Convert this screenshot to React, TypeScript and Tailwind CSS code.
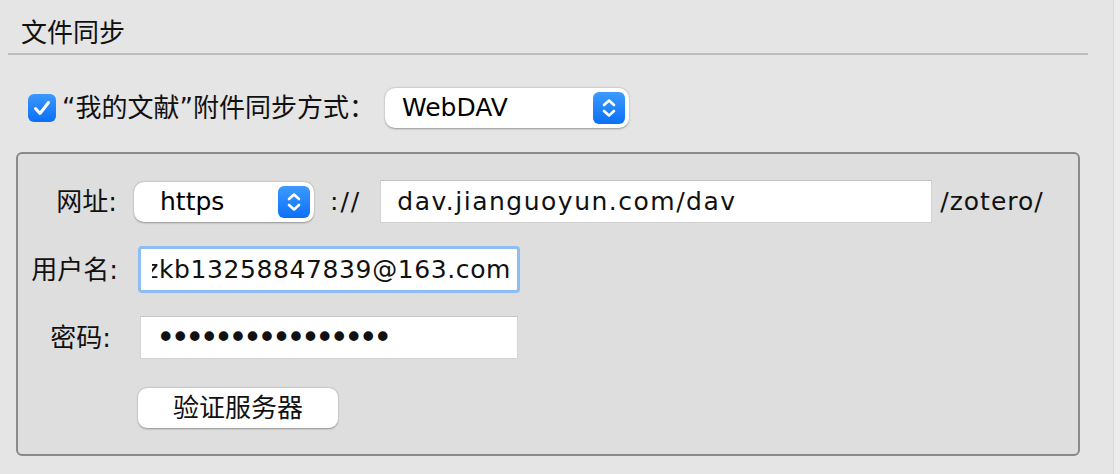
import React from "react";

const F = "font-['DejaVu_Sans','Noto_Sans_CJK_SC',sans-serif]";

function Chevrons() {
  return (
    <svg width="32" height="32" viewBox="0 0 32 32">
      <defs>
        <linearGradient id="bg" x1="0" y1="0" x2="0" y2="1">
          <stop offset="0" stopColor="#3d9bff" />
          <stop offset="1" stopColor="#0a70f6" />
        </linearGradient>
      </defs>
      <rect x="0" y="0" width="32" height="32" rx="6" fill="url(#bg)" />
      <path d="M11 13 L16 8.5 L21 13" stroke="#fff" strokeWidth="2.6" fill="none" strokeLinecap="round" strokeLinejoin="round" />
      <path d="M11 19 L16 23.5 L21 19" stroke="#fff" strokeWidth="2.6" fill="none" strokeLinecap="round" strokeLinejoin="round" />
    </svg>
  );
}

function Select({ label, w, textPl }: { label: string; w: string; textPl: string }) {
  return (
    <div className={`${w} h-[40px] bg-white rounded-[10px] shadow-[0_0.5px_2px_rgba(0,0,0,0.35)] flex items-center justify-between pr-[4px] ${textPl}`}>
      <span className="text-[25px] leading-[30px] text-black">{label}</span>
      <Chevrons />
    </div>
  );
}

export default function App() {
  return (
    <div className={`w-[1120px] h-[474px] bg-[#e5e5e5] flex text-[#111] ${F}`}>
      <div className="w-[1113px] pl-2">
        <div className="w-[1080px] pt-[18px] pb-[4px] pl-[13px] border-b-2 border-[#bcbcbc]">
          <span className="text-[26px] leading-[30px]">文件同步</span>
        </div>
        <div className="flex items-center mt-[33px] h-[40px]">
          <div className="ml-[20px] w-[28px] h-[28px]">
            <svg width="28" height="28" viewBox="0 0 28 28">
              <defs>
                <linearGradient id="cb" x1="0" y1="0" x2="0" y2="1">
                  <stop offset="0" stopColor="#3a98ff" />
                  <stop offset="1" stopColor="#0b6ff5" />
                </linearGradient>
              </defs>
              <rect x="0" y="0" width="28" height="28" rx="6" fill="url(#cb)" />
              <path d="M7.5 14.5 L12 19.5 L20.5 8.5" stroke="#fff" strokeWidth="3" fill="none" strokeLinecap="round" strokeLinejoin="round" />
            </svg>
          </div>
          <span className="ml-[6px] text-[26px] leading-[30px]">“我的文献”附件同步方式：</span>
          <div className="ml-[10px]">
            <Select label="WebDAV" w="w-[244px]" textPl="pl-[17px]" />
          </div>
        </div>
        <div className="ml-2 mt-[24px] w-[1064px] h-[304px] border-2 border-[#8b8b8b] rounded-[6px] bg-[#dedede] pt-[26px]">
          <div className="flex items-center h-[43px]">
            <span className="w-[99px] text-right text-[26px] leading-[30px]">网址:</span>
            <div className="ml-[17px]">
              <Select label="https" w="w-[180px]" textPl="pl-[26px]" />
            </div>
            <span className="ml-[16px] text-[25px] leading-[30px] tracking-[2px]">://</span>
            <div className="ml-[19px] w-[552px] h-[43px] bg-white border border-[#d2d2d2] border-t-[#c4c4c4] flex items-center pl-[16px]">
              <span className="text-[25px] leading-[30px] tracking-[1.5px]">dav.jianguoyun.com/dav</span>
            </div>
            <span className="ml-[8px] text-[25px] leading-[30px] tracking-[1px]">/zotero/</span>
          </div>
          <div className="flex items-center h-[47px] mt-[23px]">
            <span className="w-[100px] text-right text-[26px] leading-[30px]">用户名:</span>
            <div className="ml-[20px] w-[382px] h-[47px] rounded-[4px] border-[3px] border-[#8dbdf3] bg-white pl-[11px] pr-[6px] flex items-center">
              <div className="flex-1 overflow-hidden flex justify-end">
                <span className="text-[25px] leading-[30px] whitespace-nowrap tracking-[0.6px]">zkb13258847839@163.com</span>
              </div>
            </div>
          </div>
          <div className="flex items-center h-[43px] mt-[23px]">
            <span className="w-[93px] text-right text-[26px] leading-[30px]">密码:</span>
            <div className="ml-[29px] w-[378px] h-[43px] bg-white border border-[#d4d4d4] border-t-[#c6c6c6] flex items-center pl-[15px]">
              <span className="text-[33px] leading-[30px] tracking-[-5px]">••••••••••••••••</span>
            </div>
          </div>
          <div className="mt-[29px] ml-[120px] w-[200px] h-[40px] bg-white rounded-[9px] shadow-[0_0.5px_2px_rgba(0,0,0,0.35)] flex items-center justify-center">
            <span className="text-[26px] leading-[30px]">验证服务器</span>
          </div>
        </div>
      </div>
      <div className="flex-1 border-l border-[#d8d8d8] bg-[#ececec]" />
    </div>
  );
}
